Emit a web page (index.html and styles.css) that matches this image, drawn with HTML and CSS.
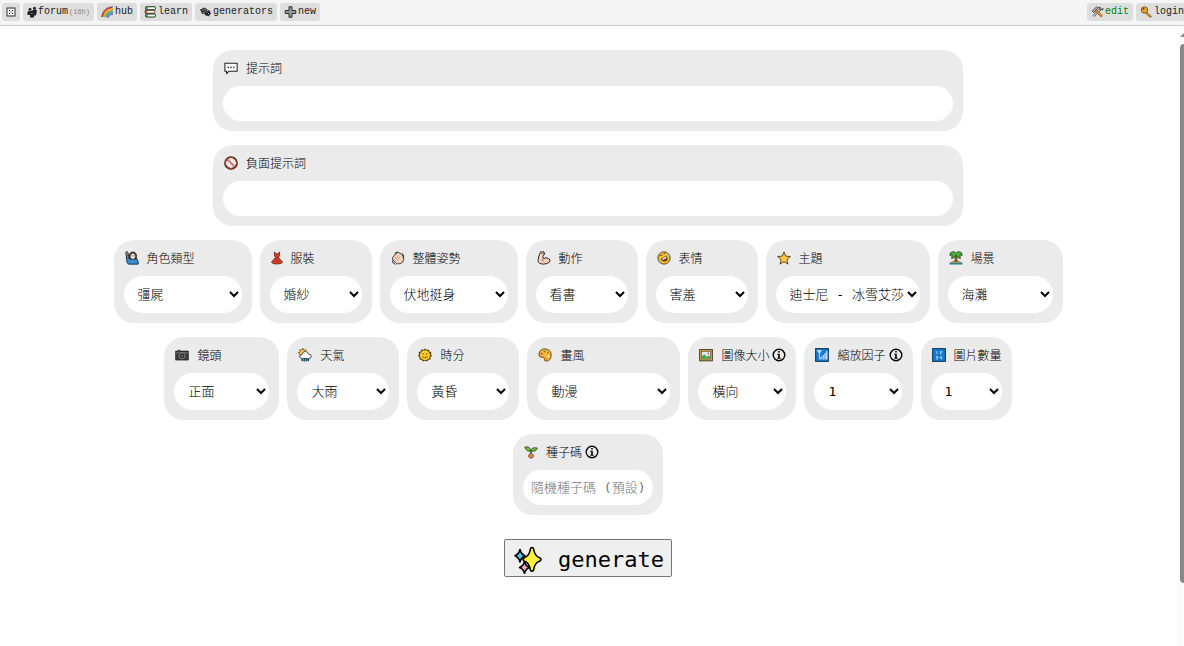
FILE: index.html
```html
<!DOCTYPE html>
<html lang="zh-Hant">
<head>
    <meta charset="UTF-8">
    <meta name="viewport" content="width=device-width, initial-scale=1.0">
    <title>AI Image Generator</title>
    <link rel="stylesheet" href="styles.css">
</head>
<body>
    <nav class="topbar">
        <button type="button" class="nav-btn" aria-label="menu">
            <svg class="nav-icon small" viewBox="0 0 10 10"><rect x="1" y="1" width="8" height="8" fill="#eee" stroke="#333"/><path d="M3 3h1v1H3zM6 3h1v1H6zM4.500 4.500h1v1h-1zM3 6h1v1H3zM6 6h1v1H6z" fill="#222"/></svg>
        </button>
        <button type="button" class="nav-btn">
            <svg class="nav-icon small" viewBox="0 0 10 11"><g fill="#222"><circle cx="3" cy="2.800" r="1.400"/><circle cx="7.500" cy="1.800" r="1.500"/><path d="M.5 5.500q2-2 3.500-.5v3.500H.5zM5 4.500q2.500-2.500 5-.5l-1 5H6z"/><circle cx="5" cy="5.500" r="1.500"/><path d="M3 8.500q2-2.500 4 0V11H3z"/></g></svg>
            forum<span class="ago">(16h)</span>
        </button>
        <button type="button" class="nav-btn">
            <svg class="nav-icon" viewBox="0 0 13 12"><g fill="none" stroke-width="1.700"><path d="M1.500 11C2 6 5.500 2 11.500 1.500" stroke="#d8382e"/><path d="M3 11C3.500 7 7 3.500 12 3.200" stroke="#f5a623"/><path d="M4.500 11.200C5 8 8 5.300 12 5" stroke="#58b947"/><path d="M6 11.500C6.500 9 9 7 12 6.600" stroke="#3d8bd8"/><path d="M7.300 11.700C8 10 9.500 8.500 12 8.200" stroke="#7b4bb0" stroke-width="1"/></g><path d="M.7 11C1 5.500 5 .9 12 .7" fill="none" stroke="#5b2d20" stroke-width=".6"/></svg>
            hub
        </button>
        <button type="button" class="nav-btn">
            <svg class="nav-icon" viewBox="0 0 11 11"><rect x="1" y=".5" width="9" height="3" rx=".6" fill="#4d9a53" stroke="#333" stroke-width=".7"/><path d="M3 1.300h6.500v1.500H3z" fill="#fff"/><rect x=".5" y="3.800" width="9" height="3" rx=".6" fill="#d9652b" stroke="#333" stroke-width=".7"/><path d="M2.500 4.600H9v1.500H2.500z" fill="#fff"/><rect x="1" y="7.200" width="9" height="3" rx=".6" fill="#4d9a53" stroke="#333" stroke-width=".7"/><path d="M3 8h6.500v1.500H3z" fill="#fff"/></svg>
            learn
        </button>
        <button type="button" class="nav-btn">
            <svg class="nav-icon" viewBox="0 0 12 12"><path d="M.5 3.500L5 1.500l3 2-1 4-4.500.5z" fill="#333"/><path d="M5.500 5l4.500-1 1.500 3.500L9 10.500 5 9z" fill="#222" stroke="#ddd" stroke-width=".3"/><g fill="#ddd"><circle cx="3.500" cy="4" r=".5"/><circle cx="5.500" cy="3.700" r=".5"/><circle cx="3.500" cy="6.500" r=".5"/><circle cx="7.500" cy="6" r=".5"/><circle cx="9" cy="7.500" r=".5"/></g></svg>
            generators
        </button>
        <button type="button" class="nav-btn">
            <svg class="nav-icon" viewBox="0 0 12 12"><path d="M4.500 .7h3v3.800h3.800v3H7.500v3.800h-3V7.500H.7v-3h3.800z" fill="#999" stroke="#222" stroke-width=".9"/></svg>
            new
        </button>
        <button type="button" class="nav-btn nav-right edit">
            <svg class="nav-icon" viewBox="0 0 12 12"><path d="M10 2L2 10" stroke="#333" stroke-width="2.400"/><path d="M10 2L2 10" stroke="#ccc" stroke-width="1.300"/><path d="M8 .8l.3 2.500 2.800.7L11.500 2" fill="none" stroke="#444"/><path d="M4.500 4.500l6 6" stroke="#5c3411" stroke-width="2.200"/><path d="M4.500 4.500l6 6" stroke="#e8952f" stroke-width="1.400"/><path d="M.7 5L5 1l2 .5L2 6.500z" fill="#bbb" stroke="#333" stroke-width=".8"/></svg>
            edit
        </button>
        <button type="button" class="nav-btn">
            <svg class="nav-icon" viewBox="0 0 12 12"><path d="M5 5l6 5.500-1.500 1L4 6z" fill="#eba52e" stroke="#694112" stroke-width=".7"/><circle cx="4" cy="4" r="3.200" fill="#eba52e" stroke="#694112" stroke-width=".8"/><circle cx="3" cy="3" r=".9" fill="#694112"/></svg>
            login
        </button>
    </nav>

    <main class="page">
        <form class="generator" onsubmit="return false">
            <div class="card prompt">
                <label for="prompt">
                    <svg class="icon" viewBox="0 0 16 16"><path d="M1 2.500h14v9.300H5.500L3 14.500v-2.700H1z" fill="#fff" stroke="#222" stroke-width="1.200" stroke-linejoin="round"/><g fill="#222"><rect x="4" y="6.500" width="1.600" height="1.600"/><rect x="7.200" y="6.500" width="1.600" height="1.600"/><rect x="10.400" y="6.500" width="1.600" height="1.600"/></g></svg>
                    提示詞
                </label>
                <input type="text" id="prompt">
            </div>
            <div class="card prompt">
                <label for="negative">
                    <svg class="icon" viewBox="0 0 16 16"><circle cx="8" cy="8" r="6.800" fill="#f3e9e7" stroke="#4b1712" stroke-width="2"/><path d="M3.500 3.500l9 9" stroke="#a04438" stroke-width="2"/><path d="M3.500 3.500l9 9" stroke="#e59a8d" stroke-width="1.200"/><circle cx="8" cy="8" r="6.400" fill="none" stroke="#c2503f" stroke-width=".8"/></svg>
                    負面提示詞
                </label>
                <input type="text" id="negative">
            </div>

            <div class="options">
                <div class="card">
                    <label for="character">
                        <svg class="icon" viewBox="0 0 16 16"><path d="M1 1.500l2-.5 2 8h8.500l1.500 3v3H4q-2-1-2-4z" fill="#3a8fd0" stroke="#123" stroke-width="1"/><path d="M5 9V4q1-3 4-3t4 3v5z" fill="#443b37" stroke="#111" stroke-width=".8"/><ellipse cx="9" cy="6" rx="2.700" ry="3.200" fill="#f4d8c4"/><path d="M1 1h2v3H1.500z" fill="#f4d8c4" stroke="#222" stroke-width=".6"/><path d="M7.500 5.500h.8M10 5.500h.8" stroke="#111"/></svg>
                        角色類型
                    </label>
                    <select id="character" class="w-l"><option>彊屍</option></select>
                </div>
                <div class="card">
                    <label for="clothes">
                        <svg class="icon dress" viewBox="1 0 14 16"><path d="M5 .8l1 1.700q2 1.500 4 0l1-1.700v4L9.800 7.500 14.500 13q-1 2-6.500 2t-6.500-2l4.700-5.500L5 4.800z" fill="#df3b24" stroke="#601b12" stroke-width=".9" stroke-linejoin="round"/><path d="M6.500 7.700h3M7 10l-1 3M9 10l1 3" stroke="#8f2114" stroke-width=".8"/></svg>
                        服裝
                    </label>
                    <select id="clothes" class="w-s"><option>婚紗</option></select>
                </div>
                <div class="card">
                    <label for="pose">
                        <svg class="icon" viewBox="0 0 16 16"><path d="M1.500 8L5.500 3q2-2 4-1l4 2.500 1 5q0 4-4 5-3.500 1-5.500-1.500L2 10z" fill="#f3d2bd" stroke="#3a2c26" stroke-width="1"/><path d="M5 9.500L8.500 5M7 11l3.500-4.500" stroke="#b08c77" stroke-width=".7"/><path d="M1 8.500l2 4.500 3 2-1 .8-3.500-2.300zM3.500 4l2-3 3-.5-2 2zM12.500 2l2.500 3v4l-2-4z" fill="#244956"/></svg>
                        整體姿勢
                    </label>
                    <select id="pose" class="w-l"><option>伏地挺身</option></select>
                </div>
                <div class="card">
                    <label for="action">
                        <svg class="icon" viewBox="0 0 16 16"><path d="M4 1h4l.7 3-2 1.800.5 3q3-2 6-.3 2.500 1.500 1.300 4Q12 15 7 15q-5 0-5.800-3Q1 7 4 1z" fill="#f3d2bd" stroke="#30231e" stroke-width="1.100" stroke-linejoin="round"/><path d="M5 3l3 .5M5.500 9.500q.5 1.500 2 2" fill="none" stroke="#30231e" stroke-width=".8"/></svg>
                        動作
                    </label>
                    <select id="action" class="w-s"><option>看書</option></select>
                </div>
                <div class="card">
                    <label for="expression">
                        <svg class="icon" viewBox="0 0 16 16"><circle cx="8" cy="8" r="7" fill="#f8bf32" stroke="#4b3510" stroke-width="1"/><path d="M4 9l7-4q3 6-2 7-3 .5-5-3z" fill="#67401a"/><path d="M5.500 9l5-2.700.3 1.700L6.500 10z" fill="#fff"/><path d="M3 5.500l3-1M7.500 3.500l2-1.500" stroke="#4b3510"/><path d="M1 10l2 .5v3zM12 3l3 1v3z" fill="#42a7bd"/></svg>
                        表情
                    </label>
                    <select id="expression" class="w-s"><option>害羞</option></select>
                </div>
                <div class="card">
                    <label for="theme">
                        <svg class="icon" viewBox="0 0 16 16"><path d="M8 1l2.100 4.900 5.200.4-4 3.500 1.300 5.200L8 12.200 3.400 15l1.300-5.200-4-3.500 5.200-.4z" fill="#ffc63e" stroke="#493818" stroke-width="1" stroke-linejoin="round"/></svg>
                        主題
                    </label>
                    <select id="theme" class="w-xxl"><option>迪士尼 - 冰雪艾莎</option></select>
                </div>
                <div class="card">
                    <label for="scene">
                        <svg class="icon" viewBox="0 0 16 16"><path d="M.5 13.500h15V15.500H.5z" fill="#318da9"/><path d="M2 13.500Q8 8.500 14 13.500z" fill="#ebbd56" stroke="#4a3d18" stroke-width=".6"/><path d="M7 6h2l.3 6H6.800z" fill="#a2672f" stroke="#3e2712" stroke-width=".7"/><path d="M8 2.500q-2-2.500-4-1.500-3 0-3 4l2.500-.5-.5 4q3 0 5-4 2 4 5 4l-.5-4 2.500.5q0-4-3-4-2-1-4 1.500z" fill="#4cae3f" stroke="#143e19" stroke-width=".9"/></svg>
                        場景
                    </label>
                    <select id="scene" class="w-m"><option>海灘</option></select>
                </div>

                <div class="card">
                    <label for="camera">
                        <svg class="icon" viewBox="0 0 16 16"><path d="M.7 3.500h2.800V2.500h2v1h9.800v10.300H.7z" fill="#3b3b3b" stroke="#222" stroke-width=".8"/><path d="M1 5.500h14" stroke="#888" stroke-width=".8"/><circle cx="8" cy="8.800" r="3.500" fill="#333" stroke="#999" stroke-width=".8"/><circle cx="8" cy="8.800" r="1.300" fill="#666"/></svg>
                        鏡頭
                    </label>
                    <select id="camera" class="w-sm"><option>正面</option></select>
                </div>
                <div class="card">
                    <label for="weather">
                        <svg class="icon" viewBox="0 0 16 16"><circle cx="5.500" cy="5.500" r="4" fill="#ffc23b" stroke="#5a4514" stroke-width=".7"/><path d="M5.500 0v1.500M1.500 1.500l1 1M0 5.500h1.500M9.500 1.500l-1 1M1.500 9.500l1-1" stroke="#333"/><path d="M5 12q-3 0-3-2.300Q2.200 7.500 4.500 7.500 5 4 8.500 4q3 .2 3.500 3 3.300.2 3.300 2.700Q15 12 12 12z" fill="#fff" stroke="#222" stroke-width=".9"/><path d="M5 12.300l-.7 2.500M7.500 12.300l-.7 3M10 12.300l-.7 3M12.300 12.300l-.7 2.500" stroke="#134e6e" stroke-width="1.800"/></svg>
                        天氣
                    </label>
                    <select id="weather" class="w-s"><option>大雨</option></select>
                </div>
                <div class="card">
                    <label for="time">
                        <svg class="icon" viewBox="0 0 16 16"><path d="M8 .5l1.800 1.600 2.500-.5.700 2.300 2.300.8-.5 2.500L16 9l-1.800 1.600.2 2.500-2.500.3L10.500 15.500 8 14.600l-2.500.9-1.400-2.100-2.500-.3.200-2.500L0 9l1.200-1.800-.5-2.500L3 3.900l.7-2.300 2.500.5z" fill="#5b4210"/><circle cx="8" cy="8.300" r="5.800" fill="#fbc92d"/><path d="M6 6v1.500M10 6v1.500" stroke="#4b360b"/><path d="M5 10q3 2.500 6 0" fill="none" stroke="#4b360b" stroke-width=".8"/></svg>
                        時分
                    </label>
                    <select id="time" class="w-s"><option>黃昏</option></select>
                </div>
                <div class="card">
                    <label for="style">
                        <svg class="icon" viewBox="0 0 16 16"><path d="M8 1q7 .5 7 7 0 6.500-5.500 7-3-.3-2.300-3 0-2-2.200-1.300Q1 11 1 7.500 1.500 1 8 1z" fill="#f7b733" stroke="#573911" stroke-width="1"/><circle cx="4" cy="6.500" r="1.200" fill="#d33c2d"/><circle cx="7.500" cy="4" r="1.200" fill="#4b9d3b"/><circle cx="11.500" cy="5.500" r="1.200" fill="#e46b21"/><circle cx="12" cy="9.500" r="1.200" fill="#fff"/><circle cx="9.700" cy="12.500" r="1" fill="#d88b20"/></svg>
                        畫風
                    </label>
                    <select id="style" class="w-xl"><option>動漫</option></select>
                </div>
                <div class="card">
                    <label for="size">
                        <svg class="icon" viewBox="0 0 16 16"><rect x=".7" y="1.700" width="14.600" height="13" fill="#c5a04b" stroke="#3f351c" stroke-width="1"/><rect x="3" y="4" width="10" height="8.500" fill="#dcecf4" stroke="#5e4b20" stroke-width=".7"/><path d="M3.300 12.200V9.500L6 7l3 3 2-1.500 1.700 1.500v2.200z" fill="#4ea252"/><circle cx="10.500" cy="6.200" r="1" fill="#c54b3a"/></svg>
                        圖像大小
                        <svg class="info" viewBox="0 0 14 14"><circle cx="7" cy="7" r="5.800" fill="none" stroke="#000" stroke-width="1.400"/><path d="M6.200 3h1.600v1.400H6.200zM5.300 5.700h2.500v4h.9v1.100H5.300V9.700h.9V6.800h-.9z"/></svg>
                    </label>
                    <select id="size" class="w-xs"><option>橫向</option></select>
                </div>
                <div class="card">
                    <label for="scale">
                        <svg class="icon" viewBox="0 0 16 16"><rect x=".7" y=".7" width="14.600" height="14.600" fill="#1679d1" stroke="#12395c" stroke-width="1.200"/><path d="M2.500 3h5M5 3v10M2.700 3.200L5 6l2.300-2.800" fill="none" stroke="#e6f4ff"/><path d="M7 13V10M9.300 13V8M11.500 13V6M13.500 13V3.500" stroke="#e6f4ff" stroke-width="1.300"/></svg>
                        縮放因子
                        <svg class="info" viewBox="0 0 14 14"><circle cx="7" cy="7" r="5.800" fill="none" stroke="#000" stroke-width="1.400"/><path d="M6.200 3h1.600v1.400H6.200zM5.300 5.700h2.500v4h.9v1.100H5.300V9.700h.9V6.800h-.9z"/></svg>
                    </label>
                    <select id="scale" class="w-xs"><option>1</option></select>
                </div>
                <div class="card">
                    <label for="count">
                        <svg class="icon" viewBox="0 0 16 16"><rect x=".7" y=".7" width="14.600" height="14.600" fill="#1679d1" stroke="#12395c" stroke-width="1.200"/><path d="M5.500 3.500v3.500M9 4h2v1.200H9.500V7H11M4.500 9.500h2v3h-2M5 11h1.500M9.500 9.500v2h2M11 9.500V13" fill="none" stroke="#b9e0ff" stroke-width=".9"/></svg>
                        圖片數量
                    </label>
                    <select id="count" class="w-xxs"><option>1</option></select>
                </div>

                <div class="card">
                    <label for="seed">
                        <svg class="icon" viewBox="0 0 16 16"><path d="M8 10.500V6" stroke="#28521c" stroke-width="1.600"/><path d="M8 7Q3 8 .8 2.500 6.500.5 8 7z" fill="#79b93b" stroke="#28521c" stroke-width="1"/><path d="M8 7q0-5 7.300-3.500Q14 8 8 7z" fill="#79b93b" stroke="#28521c" stroke-width="1"/><path d="M8 9.500q3 1 3 3.200Q10.500 15 8 15t-3-2.300Q5 10.500 8 9.500z" fill="#d8874c" stroke="#70401f" stroke-width=".9"/></svg>
                        種子碼
                        <svg class="info" viewBox="0 0 14 14"><circle cx="7" cy="7" r="5.800" fill="none" stroke="#000" stroke-width="1.400"/><path d="M6.200 3h1.600v1.400H6.200zM5.300 5.700h2.500v4h.9v1.100H5.300V9.700h.9V6.800h-.9z"/></svg>
                    </label>
                    <input type="text" id="seed" class="seed" placeholder="隨機種子碼 (預設)">
                </div>
            </div>

            <button type="submit" class="generate">
                <svg class="sparkles" viewBox="0 0 28 28"><g stroke="#000" stroke-width="1.600" stroke-linejoin="round"><path d="M18 1.500q1.300 0 1.600 1.500Q20.500 10 26 12q2 1.500 0 3-5.500 1.500-6.400 9-1.600 2.500-3.200 0-1-7.500-6.400-9-2-1.500 0-3 5.500-2 6.400-9 .3-1.500 1.600-1.500z" fill="#fff03a"/><path d="M6 3.500Q7 8 11 9.700 7 11.500 6 16 5 11.500 1 9.700 5 8 6 3.500z" fill="#4fc8ea"/><path d="M10.500 15.500q1 4.500 5 6-4 1.500-5 6-1-4.500-5-6 4-1.500 5-6z" fill="#f4a3b8"/></g></svg>
                <span>generate</span>
            </button>
        </form>
    </main>

    <div class="scrollbar" aria-hidden="true">
        <div class="arrow"></div>
        <div class="thumb"></div>
    </div>
</body>
</html>
```
FILE: styles.css
```css
* {
    box-sizing: border-box;
}

body {
    margin: 0;
    min-height: 100vh;
    position: relative;
    overflow: hidden;
    background-color: #fff;
    color: #000;
    font-family: "DejaVu Sans Mono", "Noto Sans CJK TC", monospace;
    font-size: 12px;
}

/* Top bar, the last button runs past the window edge */
.topbar {
    display: flex;
    align-items: center;
    gap: 3px;
    height: 26px;
    margin-right: -6px;
    padding: 0 2px 2px;
    background-color: #f5f5f5;
    border-bottom: 1px solid #ccc;
}

.nav-btn {
    display: flex;
    align-items: center;
    gap: 1px;
    height: 18px;
    padding: 0 4px;
    border: none;
    border-radius: 3px;
    background-color: #dedede;
    color: #222;
    font-family: "Liberation Mono", monospace;
    font-size: 10px;
    white-space: nowrap;
    cursor: pointer;
}

.nav-right {
    margin-left: auto;
}

.edit {
    color: #008000;
}

.ago {
    color: #888;
    font-size: 7px;
}

.nav-icon {
    width: 13px;
    height: 12px;
    flex: none;
}

.nav-icon.small {
    width: 10px;
}

/* Form */
.page {
    padding: 24px 8px 24px 0;
}

.generator {
    display: flex;
    flex-direction: column;
    align-items: center;
    gap: 14px;
}

.options {
    display: flex;
    flex-wrap: wrap;
    justify-content: center;
    align-items: flex-start;
    gap: 14px 8px;
    max-width: 1000px;
}

.card {
    padding: 10px;
    border-radius: 20px;
    background-color: #ebebeb;
}

.prompt {
    width: 100%;
    max-width: 750px;
}

.card label {
    display: flex;
    align-items: center;
    height: 16px;
    margin-bottom: 10px;
    padding-left: 1px;
    font-family: "Noto Sans CJK TC", sans-serif;
    font-size: 12px;
    font-weight: 300;
    line-height: 16px;
    white-space: nowrap;
}

.icon {
    width: 14px;
    height: 14px;
    margin-right: 8px;
    flex: none;
}

.dress {
    width: 12px;
}

.info {
    width: 14px;
    height: 14px;
    margin-left: 3px;
    flex: none;
}

.card input,
.card select {
    display: block;
    border: none;
    border-radius: 20px;
    background-color: #fff;
    color: #000;
    font-family: "DejaVu Sans Mono", "Noto Sans CJK TC", monospace;
    font-size: 13px;
    font-weight: 300;
}

.card input {
    width: 100%;
    height: 35px;
    padding: 0 10px;
}

.card input.seed {
    width: 130px;
    padding: 0 8px;
}

.card input::placeholder {
    color: #757575;
}

.card select {
    height: 37px;
    padding: 0 0 0 10px;
}

.w-xxs { width: 71px; }
.w-xs { width: 88px; }
.w-s { width: 92px; }
.w-sm { width: 95px; }
.w-m { width: 105px; }
.w-l { width: 118px; }
.w-xl { width: 133px; }
.w-xxl { width: 144px; }

.generate {
    display: flex;
    align-items: center;
    justify-content: space-between;
    width: 168px;
    height: 38px;
    margin-top: 10px;
    padding: 3px 7px 0 9px;
    border: 1px solid #767676;
    border-radius: 2px;
    background-color: #efefef;
    color: #000;
    font-family: "DejaVu Sans Mono", monospace;
    font-size: 22px;
    cursor: pointer;
}

.sparkles {
    width: 28px;
    height: 28px;
}

/* Scrollbar */
.scrollbar {
    position: absolute;
    top: 26px;
    right: 0;
    bottom: 0;
    width: 7px;
    padding-top: 7px;
    background-color: #fcfcfc;
    overflow: hidden;
}

.arrow {
    width: 0;
    margin: 0 0 7px 3px;
    border: 4px solid transparent;
    border-top-width: 0;
    border-bottom-color: #888;
}

.thumb {
    width: 9px;
    height: 88%;
    margin-left: 3px;
    border-radius: 4px;
    background-color: #888;
}
```
